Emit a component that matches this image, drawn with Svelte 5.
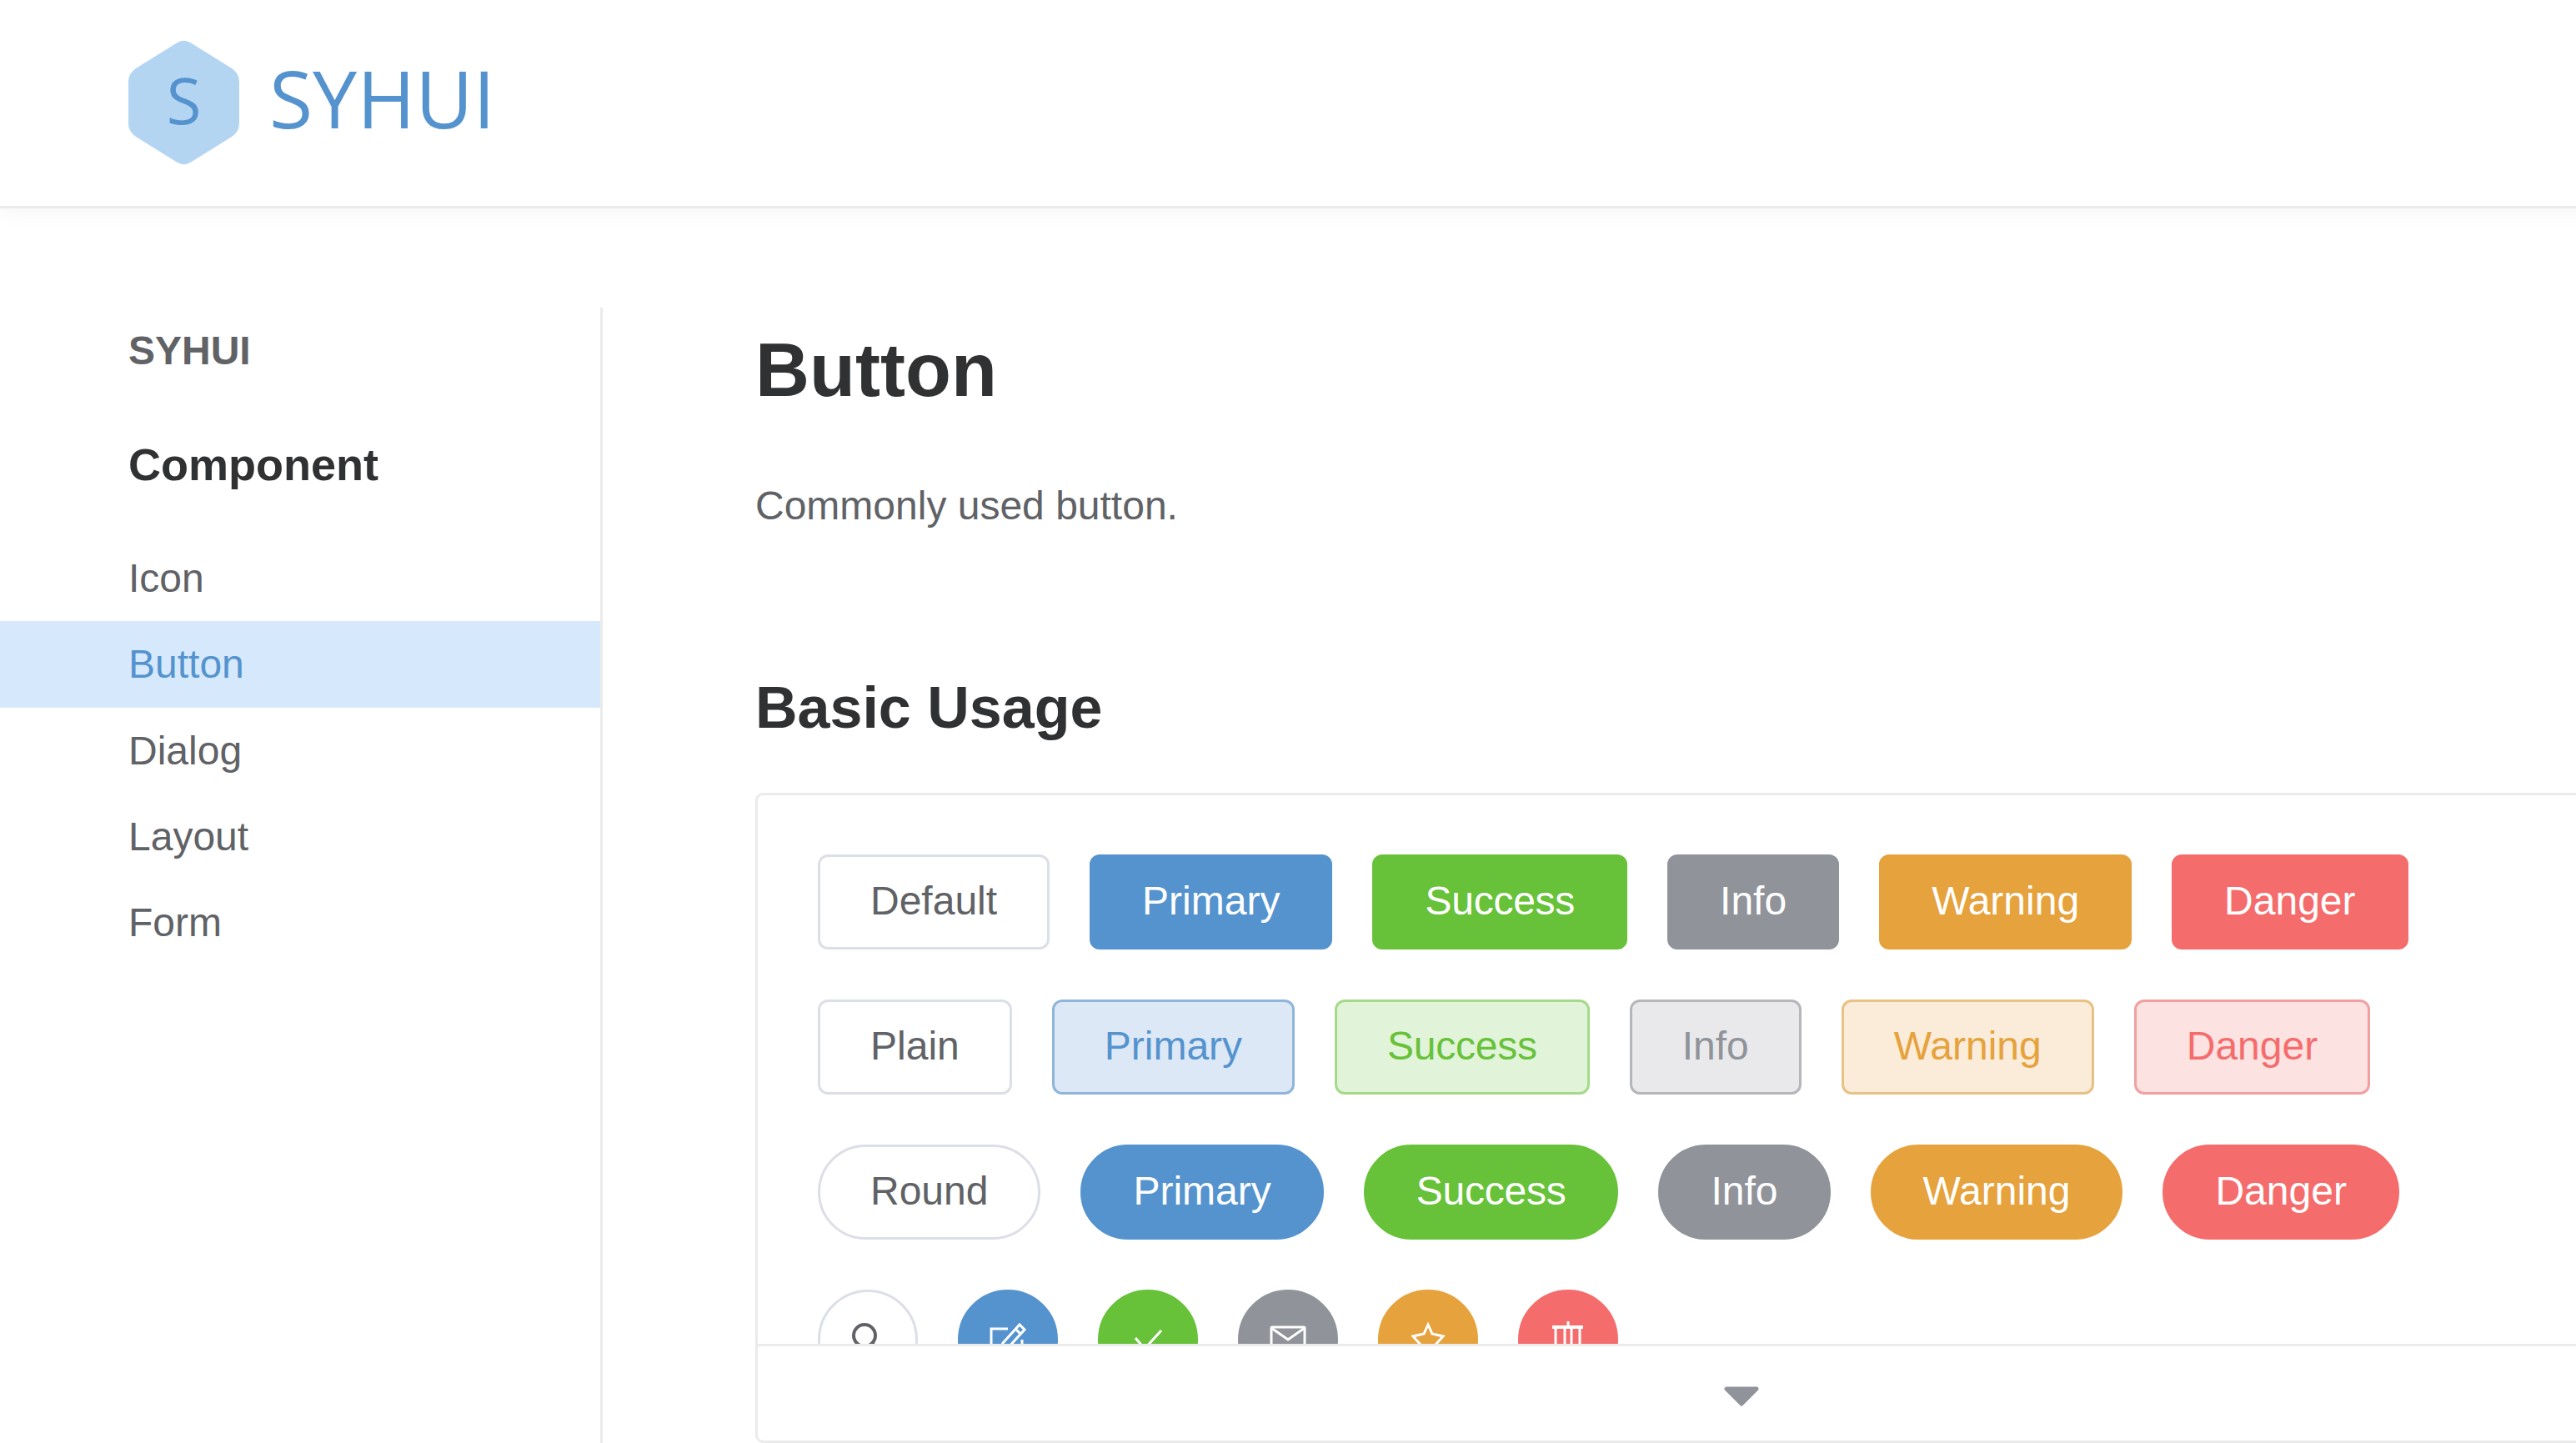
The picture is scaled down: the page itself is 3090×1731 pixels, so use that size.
<script lang="ts">
  const navItems = ['Icon', 'Button', 'Dialog', 'Layout', 'Form'];
  const kinds = ['primary', 'success', 'info', 'warning', 'danger'];
  const names = ['Primary', 'Success', 'Info', 'Warning', 'Danger'];
</script>

<div class="page">
  <header class="topnav">
    <div class="logo">
      <svg class="hex" viewBox="0 0 133 150" width="133" height="150">
        <path d="M58 3.500 a16 16 0 0 1 17 0 L124 34 q9 6 9 16 V100 q0 10 -9 16 L75 146.500 a16 16 0 0 1 -17 0 L9 116 q-9 -6 -9 -16 V50 q0 -10 9 -16 Z" fill="#b3d5f2" />
      </svg>
      <span class="hex-letter">S</span>
      <span class="logo-text">SYHUI</span>
    </div>
  </header>

  <div class="layout">
    <aside class="sidebar">
      <h2 class="brand">SYHUI</h2>
      <h3 class="group">Component</h3>
      <ul class="nav">
        {#each navItems as item}
          <li class:active={item === 'Button'}>{item}</li>
        {/each}
      </ul>
    </aside>

    <main class="content">
      <h1>Button</h1>
      <p class="lead">Commonly used button.</p>
      <h2 class="section">Basic Usage</h2>

      <div class="demo">
        <div class="demo-body">
          <div class="row">
            <button class="btn">Default</button>
            {#each kinds as kind, i}
              <button class="btn {kind}">{names[i]}</button>
            {/each}
          </div>
          <div class="row">
            <button class="btn">Plain</button>
            {#each kinds as kind, i}
              <button class="btn plain {kind}">{names[i]}</button>
            {/each}
          </div>
          <div class="row">
            <button class="btn round">Round</button>
            {#each kinds as kind, i}
              <button class="btn round {kind}">{names[i]}</button>
            {/each}
          </div>
          <div class="row">
            <button class="btn circle" aria-label="search">
              <svg viewBox="0 0 48 48" width="48" height="48" fill="none" stroke="currentColor" stroke-width="4">
                <circle cx="20" cy="19" r="13" />
                <path d="M30 29 L43 43" />
              </svg>
            </button>
            <button class="btn circle primary" aria-label="edit">
              <svg viewBox="0 0 48 48" width="48" height="48" fill="none" stroke="currentColor" stroke-width="3">
                <path d="M24 11 H4 V44 H41 V24" />
                <path d="M15 36 L18 28 L38 6 L44 12 L24 34 Z M33 11 L39 17" />
              </svg>
            </button>
            <button class="btn circle success" aria-label="check">
              <svg viewBox="0 0 48 48" width="48" height="48" fill="none" stroke="currentColor" stroke-width="3">
                <path d="M9 22 L20 35 L40 13" />
              </svg>
            </button>
            <button class="btn circle info" aria-label="message">
              <svg viewBox="0 0 48 48" width="48" height="48" fill="none" stroke="currentColor" stroke-width="3">
                <rect x="4" y="9" width="40" height="32" rx="1" />
                <path d="M4 10 L24 24 L44 10" />
              </svg>
            </button>
            <button class="btn circle warning" aria-label="star">
              <svg viewBox="0 0 48 48" width="48" height="48" fill="none" stroke="currentColor" stroke-width="3">
                <path d="M24 6 L29 17 L42 20 L33 30 L35 43 L24 37 L13 43 L15 30 L6 20 L19 17 Z" />
              </svg>
            </button>
            <button class="btn circle danger" aria-label="delete">
              <svg viewBox="0 0 48 48" width="48" height="48" fill="none" stroke="currentColor" stroke-width="3">
                <path d="M24 2 V9 M9 9 V44 H38 V9 M20 9 V38 M28 9 V38" />
                <path d="M5 9 H42" stroke-width="4" />
              </svg>
            </button>
          </div>
        </div>
        <div class="demo-footer">
          <svg viewBox="0 0 44 24" width="44" height="24">
            <path d="M4 3 H40 L22 21 Z" fill="#909399" stroke="#909399" stroke-width="5" stroke-linejoin="round" />
          </svg>
        </div>
      </div>
    </main>
  </div>
</div>

<style>
  :global(body) {
    margin: 0;
    background: #fff;
    overflow: hidden;
  }

  .page {
    width: 3272px;
    height: 1731px;
    overflow: hidden;
    font-family: "Liberation Sans", Arial, sans-serif;
    color: #606266;
  }

  .topnav {
    height: 250px;
    box-sizing: border-box;
    padding-left: 154px;
    display: flex;
    align-items: center;
    border-bottom: 3px solid #ebebeb;
    box-shadow: 0 6px 24px rgba(0, 0, 0, 0.04);
  }

  .logo {
    position: relative;
    display: flex;
    align-items: center;
    gap: 36px;
    margin-top: -1px;
  }

  .hex {
    display: block;
  }

  .hex-letter {
    position: absolute;
    left: 0;
    top: 20px;
    width: 133px;
    text-align: center;
    font-family: "Open Sans", sans-serif;
    font-size: 76px;
    color: #5593ce;
  }

  .logo-text {
    font-family: "Open Sans", sans-serif;
    font-size: 95px;
    line-height: 1;
    margin-top: -12px;
    color: #5593ce;
  }

  .layout {
    display: flex;
    padding-top: 119px;
  }

  .sidebar {
    width: 723px;
    box-sizing: border-box;
    height: 1400px;
    border-right: 3px solid #ebebeb;
    flex: none;
  }

  .brand {
    margin: 19px 0 0 154px;
    font-size: 48px;
    line-height: 66px;
    font-weight: 700;
    color: #606266;
  }

  .group {
    margin: 67px 0 0 154px;
    font-size: 54px;
    line-height: 72px;
    font-weight: 700;
    color: #303133;
  }

  .nav {
    list-style: none;
    margin: 49px 0 0;
    padding: 0;
  }

  .nav li {
    height: 103.250px;
    line-height: 103.250px;
    padding-left: 154px;
    font-size: 48px;
    color: #606266;
  }

  .nav li.active {
    background: #d6e9fc;
    color: #5593ce;
  }

  .content {
    margin-left: 183px;
    width: 2366px;
    flex: none;
  }

  h1 {
    margin: 25px 0 0;
    font-size: 90px;
    line-height: 100px;
    color: #303133;
  }

  .lead {
    margin: 80px 0 0;
    font-size: 48px;
    line-height: 66px;
    color: #606266;
  }

  .section {
    margin: 169px 0 0;
    font-size: 70px;
    line-height: 80px;
    color: #303133;
  }

  .demo {
    margin-top: 62px;
    border: 3px solid #ebebeb;
    border-radius: 9px;
  }

  .demo-body {
    height: 658px;
    box-sizing: border-box;
    padding: 71px 72px 0;
    overflow: hidden;
    display: flex;
    flex-direction: column;
    gap: 60px;
  }

  .row {
    display: flex;
    gap: 48px;
    flex: none;
  }

  .btn {
    box-sizing: border-box;
    height: 114px;
    padding: 0 60px 3px;
    border: 3px solid #dcdfe6;
    border-radius: 12px;
    background: #fff;
    color: #606266;
    font-family: inherit;
    font-size: 48px;
    flex: none;
  }

  .btn.primary { background: #5593ce; border-color: #5593ce; color: #fff; }
  .btn.success { background: #67c23a; border-color: #67c23a; color: #fff; letter-spacing: -0.25px; }
  .btn.info { background: #909399; border-color: #909399; color: #fff; }
  .btn.warning { background: #e6a23c; border-color: #e6a23c; color: #fff; }
  .btn.danger { background: #f56c6c; border-color: #f56c6c; color: #fff; }

  .btn.plain.primary { background: #dce8f5; border-color: #8fb5da; color: #5593ce; }
  .btn.plain.success { background: #e1f3d8; border-color: #a4da89; color: #67c23a; }
  .btn.plain.info { background: #e9e9eb; border-color: #b4b6ba; color: #909399; }
  .btn.plain.warning { background: #faecd8; border-color: #e8c184; color: #e6a23c; }
  .btn.plain.danger { background: #fde2e2; border-color: #f0a0a0; color: #f56c6c; }

  .btn.round {
    border-radius: 60px;
  }

  .btn.circle {
    width: 120px;
    height: 120px;
    padding: 0;
    border-radius: 50%;
    display: flex;
    align-items: center;
    justify-content: center;
  }

  .demo-footer {
    height: 113px;
    border-top: 3px solid #ebebeb;
    display: flex;
    align-items: center;
    justify-content: center;
  }

  .demo-footer svg {
    margin-top: 6px;
  }
</style>
